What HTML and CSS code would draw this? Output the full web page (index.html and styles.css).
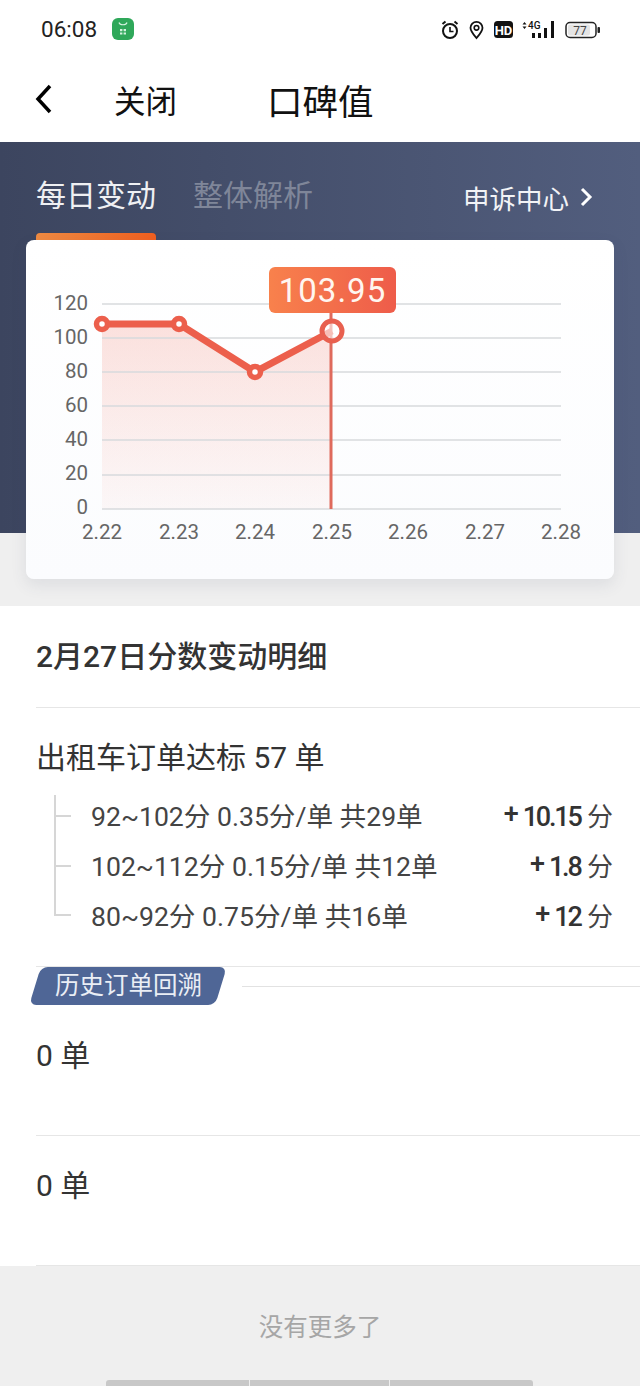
FILE: index.html
```html
<!DOCTYPE html>
<html>

<head>
    <meta charset="utf-8" />
    <title>口碑值</title>
    <link rel="stylesheet" href="styles.css">
</head>

<body>
    <div class="status">
        <span class="time">06:08</span>
        <svg class="app-icon" width="22" height="22" viewBox="0 0 22 22">
            <rect width="22" height="22" rx="6" fill="#2fa85a" />
            <path d="M7 4.500c1 3 7 3 8 0" fill="none" stroke="#d5f2df" stroke-width="1.200" />
            <path d="M8 11h2.400v2.200H8zM11.600 11H14v2.200h-2.400zM8 14.400h2.400v2.200H8zM11.600 14.400H14v2.200h-2.400z" fill="#d5f2df" />
        </svg>
        <svg class="status-icons" width="162" height="24" viewBox="440 16 162 24">
            <circle cx="450" cy="30" r="7" fill="none" stroke="#111" stroke-width="2" />
            <path d="M450 26v4.500h3.500" fill="none" stroke="#111" stroke-width="1.600" />
            <path d="M442.500 23l3-2.500M457.500 23l-3-2.500" stroke="#111" stroke-width="2" />
            <path d="M476.500 37c-3-3.500-6-6.500-6-10.200a6 6 0 0 1 12 0c0 3.700-3 6.700-6 10.200z" fill="none" stroke="#111" stroke-width="1.800" />
            <circle cx="476.500" cy="26.800" r="2.300" fill="none" stroke="#111" stroke-width="1.600" />
            <rect x="494" y="20" width="19" height="17" rx="3.500" fill="#111" />
            <text x="503.500" y="33.500" class="hd">HD</text>
            <path d="M522.500 23.500l2-2.500 2 2.500zM522.500 25.500l2 2.500 2-2.500z" fill="#111" />
            <text x="528" y="28" class="net">4G</text>
            <path d="M532 32h3v5h-3zM538 32h3v5h-3zM544 27h3v10h-3zM551 20h3v17h-3z" fill="#111" />
            <rect x="566" y="21.500" width="30" height="15" rx="4" fill="#fff" stroke="#222" stroke-width="1.500" />
            <rect x="568" y="23.500" width="22" height="11" rx="2" fill="#e4e4e4" />
            <rect x="597.500" y="26" width="2.500" height="6" rx="1" fill="#222" />
            <text x="580" y="34" class="batt">77</text>
        </svg>
    </div>

    <div class="nav">
        <svg class="back" width="17" height="30" viewBox="0 0 17 30">
            <path d="M15 2L3 15l12 13" fill="none" stroke="#000" stroke-width="3.500" />
        </svg>
        <span class="close">关闭</span>
        <span class="title">口碑值</span>
    </div>

    <div class="hero">
        <div class="tabs">
            <a class="tab active">每日变动</a>
            <a class="tab">整体解析</a>
            <a class="appeal">申诉中心
                <svg width="13" height="20" viewBox="0 0 13 20">
                    <path d="M2 2l8 8-8 8" fill="none" stroke="#fff" stroke-width="3" />
                </svg>
            </a>
        </div>
    </div>

    <div class="card">
        <svg class="chart" width="588" height="339" viewBox="26 240 588 339">
            <defs>
                <linearGradient id="area" x1="0" y1="0" x2="0" y2="1">
                    <stop offset="0" stop-color="#ee6a58" stop-opacity=".2" />
                    <stop offset="1" stop-color="#ee6a58" stop-opacity=".04" />
                </linearGradient>
                <linearGradient id="tip" x1="0" y1="0" x2="1" y2="0">
                    <stop offset="0" stop-color="#f8814c" />
                    <stop offset="1" stop-color="#ee5c4a" />
                </linearGradient>
            </defs>
            <path d="M102 324L179 324L255 372L332 331V509H102z" fill="url(#area)" />
            <g class="grid">
                <path d="M102 304H561M102 338H561M102 372H561M102 406H561M102 440H561M102 475H561M102 509H561" />
            </g>
            <g class="y-labels">
                <text x="88" y="310">120</text>
                <text x="88" y="344">100</text>
                <text x="88" y="378">80</text>
                <text x="88" y="412">60</text>
                <text x="88" y="446">40</text>
                <text x="88" y="480">20</text>
                <text x="88" y="514">0</text>
            </g>
            <g class="x-labels">
                <text x="102" y="539">2.22</text>
                <text x="179" y="539">2.23</text>
                <text x="255" y="539">2.24</text>
                <text x="332" y="539">2.25</text>
                <text x="408" y="539">2.26</text>
                <text x="485" y="539">2.27</text>
                <text x="561" y="539">2.28</text>
            </g>
            <path class="marker" d="M331 313V509" />
            <path class="line" d="M102 324L179 324L255 372L332 331" />
            <circle class="dot" cx="102" cy="324" r="5.500" />
            <circle class="dot" cx="179" cy="324" r="5.500" />
            <circle class="dot" cx="255" cy="372" r="5.500" />
            <circle class="ring" cx="332" cy="331" r="10" />
            <rect x="269" y="267" width="127" height="46" rx="6" fill="url(#tip)" />
            <text class="tip-text" x="332.500" y="302">103.95</text>
        </svg>
    </div>

    <div class="detail">
        <h2 class="detail-title">2月27日分数变动明细</h2>
        <div class="order-head">出租车订单达标 57 单</div>
        <ul class="tree">
            <li>
                <i class="tick first"></i>
                <span class="rule">92~102分 0.35分/单 共29单</span>
                <span class="score"><b class="plus">+</b><b class="num">10.15</b> 分</span>
            </li>
            <li>
                <i class="tick"></i>
                <span class="rule">102~112分 0.15分/单 共12单</span>
                <span class="score"><b class="plus">+</b><b class="num">1.8</b> 分</span>
            </li>
            <li>
                <i class="tick last"></i>
                <span class="rule">80~92分 0.75分/单 共16单</span>
                <span class="score"><b class="plus">+</b><b class="num">12</b> 分</span>
            </li>
        </ul>
        <div class="history-head">
            <div class="tag"><span>历史订单回溯</span></div>
            <div class="tag-line"></div>
        </div>
        <div class="history first">0 单</div>
        <div class="history">0 单</div>
    </div>

    <div class="footer">
        <div class="no-more">没有更多了</div>
        <div class="bars">
            <i class="bar"></i>
            <i class="bar mid"></i>
            <i class="bar"></i>
        </div>
    </div>
</body>

</html>
```

FILE: styles.css
```css
html,
body,
h2,
ul,
li {
    margin: 0;
    padding: 0;
}

ul {
    list-style-type: none;
}

body {
    width: 640px;
    height: 1386px;
    overflow: hidden;
    background: #efefef;
    font-family: Roboto, "Noto Sans CJK SC", sans-serif;
    color: #333;
}

/* status bar */
.status {
    display: flex;
    align-items: center;
    height: 56px;
    padding: 2px 0 0 41px;
    box-sizing: border-box;
    background: #fff;
}

.time {
    font-size: 22.500px;
    color: #222;
}

.app-icon {
    margin-left: 15px;
}

.status-icons {
    margin-left: auto;
    margin-right: 38px;
}

.status-icons .hd {
    font: 700 13px Roboto, sans-serif;
    fill: #fff;
    text-anchor: middle;
}

.status-icons .net {
    font: 500 10px Roboto, sans-serif;
    fill: #111;
}

.status-icons .batt {
    font: 400 12px Roboto, sans-serif;
    fill: #444;
    text-anchor: middle;
}

/* nav */
.nav {
    display: flex;
    align-items: center;
    height: 86px;
    background: #fff;
    color: #111;
}

.back {
    margin-left: 35px;
}

.close {
    margin-left: 62px;
    font-size: 31.500px;
}

.title {
    margin-left: 90px;
    font-size: 35.500px;
}

/* dark hero */
.hero {
    height: 391px;
    background: linear-gradient(90deg, #3c455f, #525e7e);
}

.tabs {
    display: flex;
    align-items: flex-start;
    padding: 32px 47px 0 36px;
}

.tab {
    height: 66px;
    margin-right: 37px;
    font-size: 30px;
    line-height: 44px;
    color: #7f8699;
}

.tab.active {
    color: #eff0f3;
}

.tab.active::after {
    content: "";
    display: block;
    height: 7px;
    margin-top: 15px;
    border-radius: 4px 4px 0 0;
    background: linear-gradient(90deg, #ef8b42, #f05f1f);
}

.appeal {
    display: flex;
    align-items: center;
    gap: 11px;
    height: 46px;
    margin-left: auto;
    font-size: 26.500px;
    color: #f2f3f6;
}

/* chart card */
.card {
    position: relative;
    width: 588px;
    height: 339px;
    margin: -293px 0 27px 26px;
    border-radius: 8px;
    background: linear-gradient(180deg, #fff, #fbfcfe);
    box-shadow: 0 6px 16px rgba(60, 70, 95, .1);
}

.chart {
    display: block;
}

.grid path {
    fill: none;
    stroke: #d8dadd;
    stroke-width: 1.500;
}

.y-labels text {
    font-size: 20.500px;
    fill: #666;
    text-anchor: end;
}

.x-labels text {
    font-size: 20.500px;
    fill: #666;
    text-anchor: middle;
}

.marker {
    stroke: #df6a5c;
    stroke-width: 3;
}

.line {
    fill: none;
    stroke: #ec5f4c;
    stroke-width: 7;
}

.dot {
    fill: #fff;
    stroke: #ec5f4c;
    stroke-width: 5.500;
}

.ring {
    fill: rgba(255, 255, 255, .6);
    stroke: #e8604f;
    stroke-width: 5;
}

.tip-text {
    font-size: 33px;
    letter-spacing: 1px;
    fill: #fff6f0;
    text-anchor: middle;
}

/* detail list */
.detail {
    padding-left: 36px;
    background: #fff;
}

.detail-title {
    height: 100px;
    padding-top: 1px;
    border-bottom: 1px solid #e6e6e6;
    font-size: 30px;
    font-weight: 500;
    line-height: 100px;
    color: #333;
}

.order-head {
    height: 81px;
    font-size: 30px;
    line-height: 100px;
}

.tree {
    padding: 0 27px 0 18px;
    margin-bottom: 27px;
}

.tree li {
    display: flex;
    align-items: center;
    height: 50px;
}

.tick {
    display: flex;
    align-items: center;
    align-self: flex-start;
    width: 15px;
    height: 50px;
    margin-top: 2px;
    border-left: 2px solid #d6d6d6;
}

.tick::after {
    content: "";
    width: 15px;
    height: 2px;
    background: #d6d6d6;
}

.tick.first {
    align-items: flex-start;
    height: 46px;
    margin-top: 6px;
}

.tick.first::after {
    margin-top: 20px;
}

.tick.last {
    align-items: flex-end;
    height: 25px;
}

.rule {
    margin-left: 20px;
    font-size: 26.600px;
    color: #444;
}

.score {
    margin-left: auto;
    font-size: 26px;
    color: #444;
}

.plus {
    position: relative;
    top: -3px;
    margin-right: 4px;
    font-size: 27px;
    font-weight: 500;
    color: #333;
}

.num {
    font-size: 27px;
    font-weight: 500;
    letter-spacing: -2.200px;
    color: #333;
}

.history-head {
    display: flex;
    align-items: center;
    border-top: 1px solid #e6e6e6;
}

.tag {
    width: 186px;
    height: 38px;
    margin-left: -1px;
    border-radius: 7px;
    background: #4f6696;
    transform: skewX(-17deg);
    text-align: center;
    line-height: 38px;
}

.tag span {
    display: inline-block;
    transform: skewX(17deg);
    font-size: 24.500px;
    color: #eaeef5;
}

.tag-line {
    flex: 1;
    height: 1px;
    margin-left: 21px;
    background: #e2e2e2;
}

.history {
    height: 129px;
    border-bottom: 1px solid #e6e6e6;
    font-size: 30px;
    line-height: 100px;
}

.history.first {
    height: 130px;
    line-height: 102px;
}

/* footer */
.footer {
    height: 120px;
    padding-top: 45px;
    box-sizing: border-box;
}

.no-more {
    height: 34px;
    font-size: 24.500px;
    line-height: 34px;
    text-align: center;
    color: #a6a6a6;
}

.bars {
    display: flex;
    gap: 1px;
    margin: 35px 0 0 106px;
}

.bar {
    width: 143px;
    height: 6px;
    background: #c8c8c8;
    border-radius: 3px 0 0 0;
}

.bar.mid {
    width: 139px;
    border-radius: 0;
}

.bar:last-child {
    border-radius: 0 3px 0 0;
}
```
